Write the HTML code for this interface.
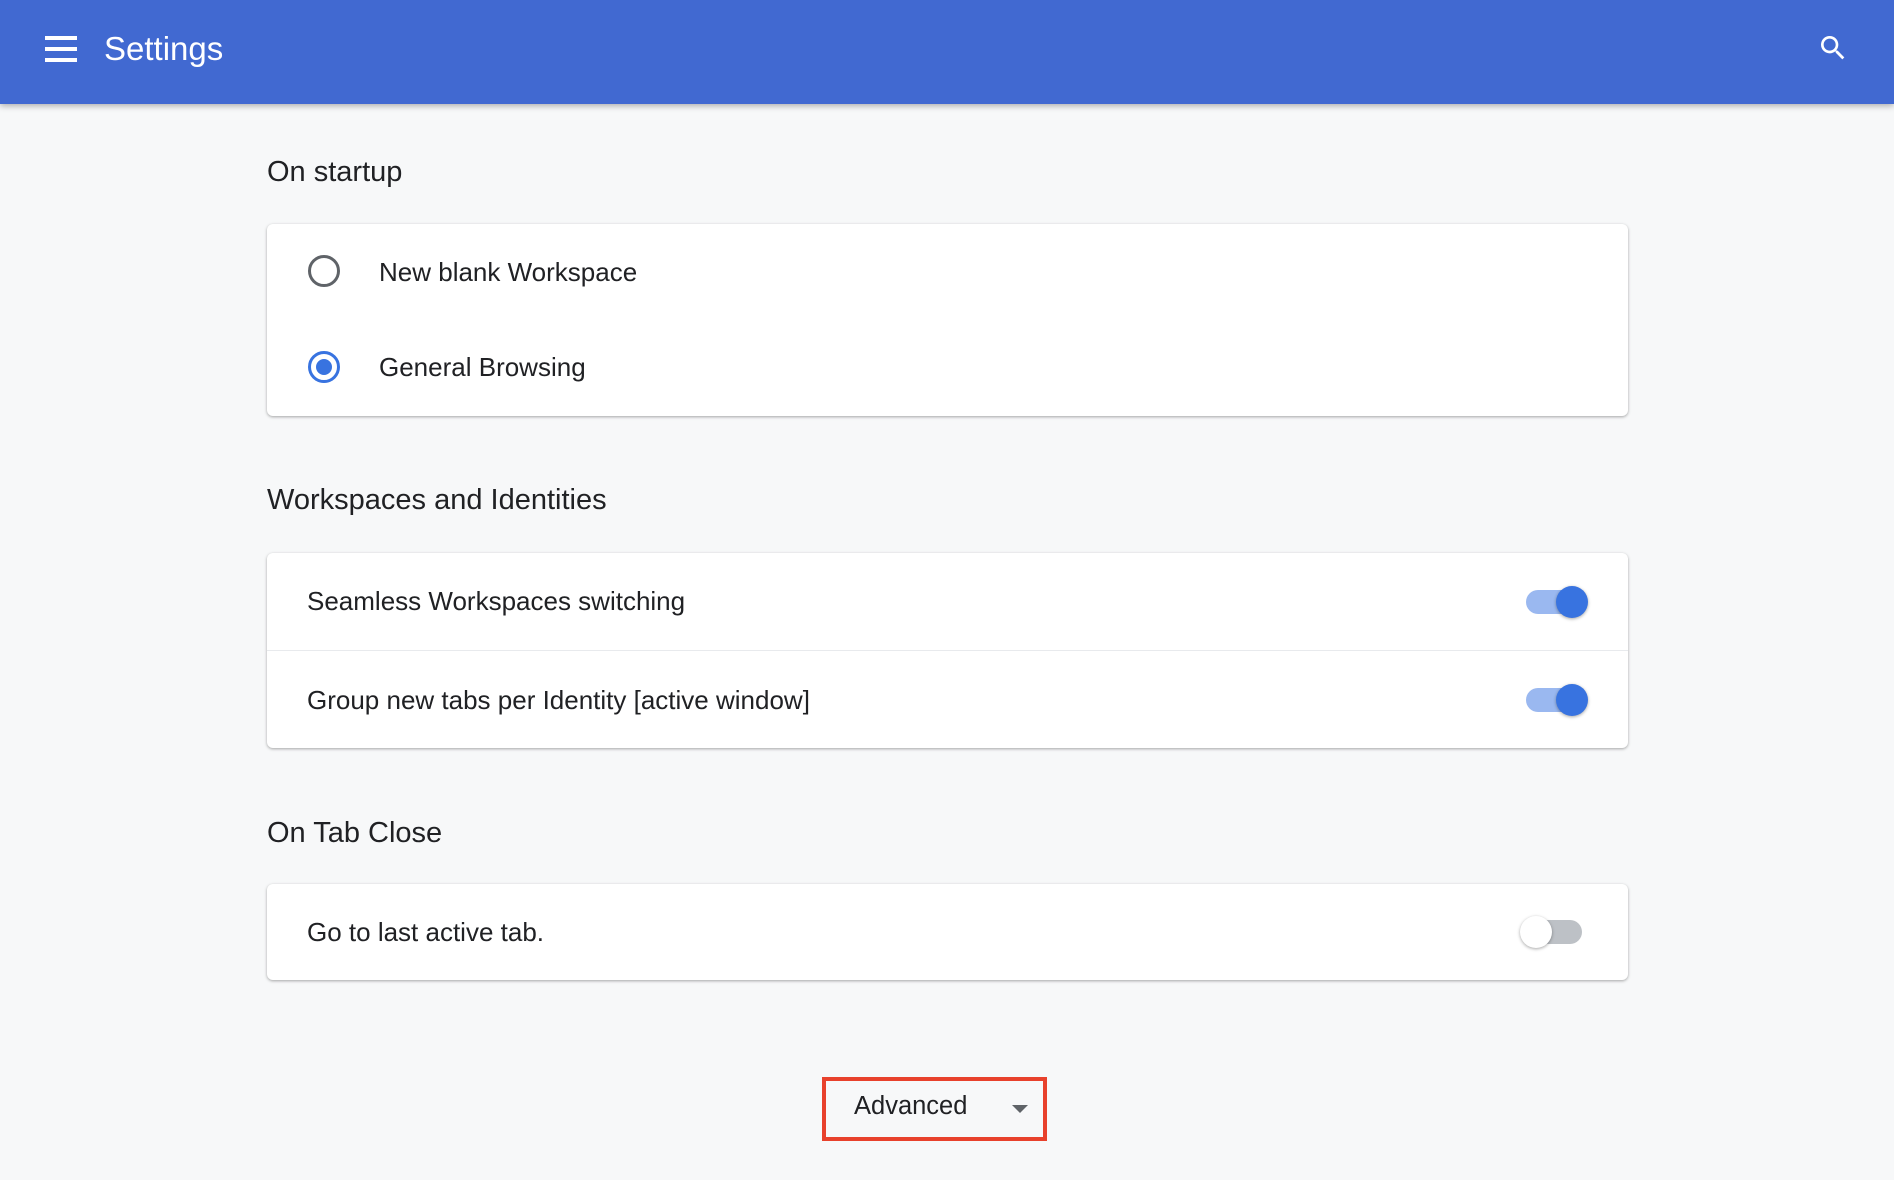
<!DOCTYPE html>
<html><head><meta charset="utf-8"><style>
*{margin:0;padding:0;box-sizing:border-box}
body{width:1894px;height:1180px;background:#f7f8f9;font-family:"Liberation Sans",Arial,sans-serif;color:#202124;position:relative;overflow:hidden}
.hdr{position:absolute;left:0;top:0;width:1894px;height:104px;background:#4169d1;box-shadow:0 2px 6px rgba(0,0,0,.3)}
.bar{position:absolute;left:45px;width:32px;height:4px;background:#fff}
.t{position:absolute;white-space:nowrap;line-height:1}
.h{font-size:29px;color:#202124}
.card{position:absolute;left:267px;width:1361px;background:#fff;border-radius:6px;box-shadow:0 1px 3px rgba(0,0,0,.25),0 1px 2px rgba(0,0,0,.1)}
.it{font-size:26px}
.radio{position:absolute;width:32px;height:32px;border-radius:50%;border:3.5px solid #5f6368}
.tr{position:absolute;height:24px;border-radius:12px}
.kn{position:absolute;width:32px;height:32px;border-radius:50%;box-shadow:0 1px 3px rgba(0,0,0,.35)}
</style></head><body>
<div class="hdr">
<div class="bar" style="top:36px"></div><div class="bar" style="top:47px"></div><div class="bar" style="top:58px"></div>
<div class="t" style="left:104px;top:32px;font-size:33px;color:#fff">Settings</div>
<svg style="position:absolute;left:1817px;top:32px" width="32" height="32" viewBox="0 0 24 24"><path fill="#fff" d="M15.5 14h-.79l-.28-.27A6.47 6.47 0 0 0 16 9.5 6.5 6.5 0 1 0 9.5 16c1.61 0 3.09-.59 4.23-1.57l.27.28v.79l5 4.99L20.49 19l-4.99-5zm-6 0C7.01 14 5 11.99 5 9.5S7.01 5 9.5 5 14 7.01 14 9.5 11.99 14 9.5 14z"/></svg>
</div>

<div class="t h" style="left:267px;top:158px">On startup</div>
<div class="card" style="top:224px;height:192px"></div>
<div class="radio" style="left:308px;top:255px"></div>
<div class="t it" style="left:379px;top:259px">New blank Workspace</div>
<div class="radio" style="left:308px;top:351px;border-color:#3873e0"></div>
<div style="position:absolute;left:316px;top:359px;width:16px;height:16px;border-radius:50%;background:#3873e0"></div>
<div class="t it" style="left:379px;top:354px">General Browsing</div>

<div class="t h" style="left:267px;top:486px">Workspaces and Identities</div>
<div class="card" style="top:553px;height:195px"></div>
<div style="position:absolute;left:267px;top:650px;width:1361px;height:1px;background:#e8eaed"></div>
<div class="t it" style="left:307px;top:588px">Seamless Workspaces switching</div>
<div class="tr" style="left:1526px;top:590px;width:60px;background:#9ab8f0"></div>
<div class="kn" style="left:1556px;top:586px;background:#3873e0"></div>
<div class="t it" style="left:307px;top:687px">Group new tabs per Identity [active window]</div>
<div class="tr" style="left:1526px;top:688px;width:60px;background:#9ab8f0"></div>
<div class="kn" style="left:1556px;top:684px;background:#3873e0"></div>

<div class="t h" style="left:267px;top:819px">On Tab Close</div>
<div class="card" style="top:884px;height:96px"></div>
<div class="t it" style="left:307px;top:919px">Go to last active tab.</div>
<div class="tr" style="left:1522px;top:920px;width:60px;background:#bdc1c6"></div>
<div class="kn" style="left:1520px;top:916px;background:#fff"></div>

<div style="position:absolute;left:822px;top:1077px;width:225px;height:64px;border:4px solid #e8412c"></div>
<div class="t" style="left:854px;top:1094px;font-size:25.5px">Advanced</div>
<div style="position:absolute;left:1012px;top:1105px;width:0;height:0;border-left:8px solid transparent;border-right:8px solid transparent;border-top:8px solid #5f6368"></div>
</body></html>
